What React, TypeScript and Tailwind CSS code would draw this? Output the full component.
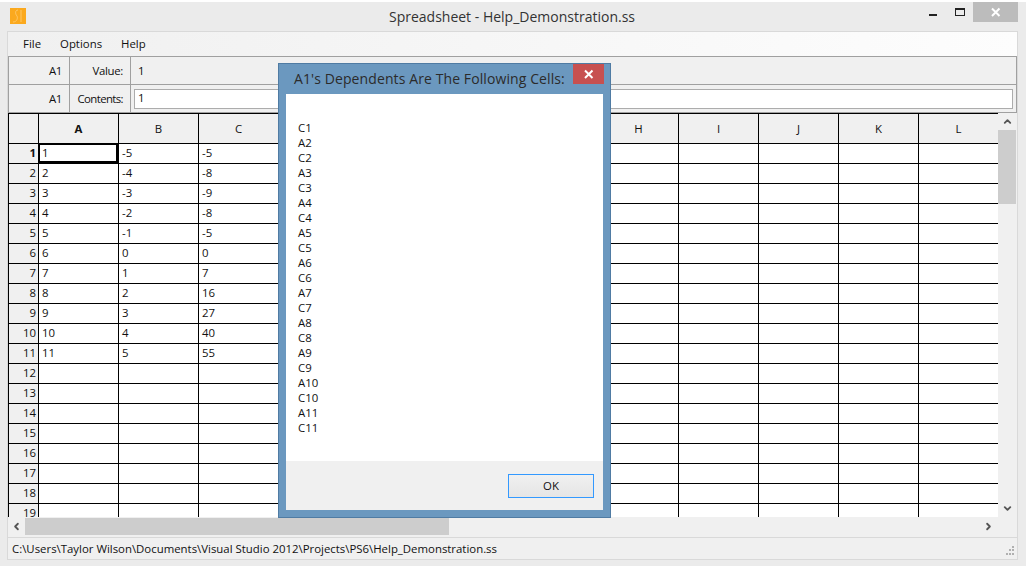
import React from 'react'
import { LuChevronUp, LuChevronDown, LuChevronLeft, LuChevronRight } from 'react-icons/lu'

const columns = ['A', 'B', 'C', 'D', 'E', 'F', 'G', 'H', 'I', 'J', 'K', 'L']
const colB = ['-5', '-4', '-3', '-2', '-1', '0', '1', '2', '3', '4', '5']
const colC = ['-5', '-8', '-9', '-8', '-5', '0', '7', '16', '27', '40', '55']
const dependents = ['C1', 'A2', 'C2', 'A3', 'C3', 'A4', 'C4', 'A5', 'C5', 'A6', 'C6', 'A7', 'C7', 'A8', 'C8', 'A9', 'C9', 'A10', 'C10', 'A11', 'C11']
const rows = Array.from({ length: 19 }, (_, i) => i + 1)

const cellText = (row: number, col: number) => {
  if (row > 11) return ''
  if (col === 0) return String(row)
  if (col === 1) return colB[row - 1]
  if (col === 2) return colC[row - 1]
  return ''
}

const Grid: React.FC = () => (
  <div className="flex-1 min-w-0 h-full overflow-hidden border-l border-t border-black bg-white">
    <div className="flex h-[30px] w-[990px] bg-[#f0f0f0]">
      <div className="w-[30px] shrink-0 border-r border-b border-black" />
      {columns.map((c, i) => (
        <div key={c} className={`w-[80px] shrink-0 border-r border-b border-black flex items-center justify-center ${i === 0 ? 'font-bold' : ''}`}>
          {c}
        </div>
      ))}
    </div>
    {rows.map(r => (
      <div key={r} className="flex h-[20px] w-[990px]">
        <div className={`w-[30px] shrink-0 border-r border-b border-black bg-[#f0f0f0] flex items-center justify-end pr-[2px] pb-[1px] ${r === 1 ? 'font-bold' : ''}`}>
          {r}
        </div>
        {columns.map((c, i) => (
          <div key={c} className="relative w-[80px] shrink-0 border-r border-b border-black flex items-center pl-[3px] pb-[1px]">
            {cellText(r, i)}
            {r === 1 && i === 0 && <div className="absolute -left-px -top-px w-[80px] h-[20px] border-2 border-black" />}
          </div>
        ))}
      </div>
    ))}
  </div>
)

const Dialog: React.FC = () => (
  <div className="absolute left-[278px] top-[63px] w-[333px] h-[455px] bg-[#6b98bf] border border-[#4f7ba3] flex flex-col px-[7px] pb-[7px]">
    <div className="h-[30px] shrink-0 flex items-start relative">
      <span className="ml-[8px] mt-[4px] text-[14px] leading-[22px] tracking-[0.1px] text-[#2b2b2b]">A1's Dependents Are The Following Cells:</span>
      <div className="absolute right-[-1px] top-0 w-[31px] h-[20px] bg-[#c75050] flex items-center justify-center">
        <svg width="10" height="10" viewBox="0 0 10 10"><path d="M1 1.5 L8.5 9 M8.5 1.5 L1 9" stroke="#fff" strokeWidth="2" /></svg>
      </div>
    </div>
    <div className="flex-1 flex flex-col min-h-0">
      <div className="h-[367px] bg-white pl-[12px] pt-[26px] leading-[15px] text-[#111]">
        {dependents.map(d => <div key={d}>{d}</div>)}
      </div>
      <div className="flex-1 bg-[#f0f0f0] flex justify-end items-start pt-[13px] pr-[9px]">
        <div className="w-[86px] h-[24px] border border-[#3399ff] bg-gradient-to-b from-[#f0f0f0] to-[#e5e5e5] flex items-center justify-center">OK</div>
      </div>
    </div>
  </div>
)

export default function App() {
  return (
    <div className="relative w-[1026px] h-[566px] overflow-hidden bg-[#ebebeb] text-[11.4px] text-[#111] font-['Open_Sans','Noto_Sans',sans-serif] flex flex-col">
      <div className="h-[2px] shrink-0 bg-white" />
      {/* title bar */}
      <div className="h-[29px] shrink-0 flex items-start relative">
        <div className="ml-[10px] mt-[6px] w-[16px] h-[16px] bg-[#fba91e] flex items-center justify-center">
          <svg width="12" height="14" viewBox="0 0 12 14"><path d="M6 1 C3 1 3 5 5 7 C6 9 5 13 1 13 M9 1 V13" stroke="#ffc766" strokeWidth="1" fill="none" /></svg>
        </div>
        <div className="absolute left-0 right-0 top-[3px] text-center text-[14px] leading-[24px] text-[#333] pr-[2px]">Spreadsheet - Help_Demonstration.ss</div>
        <div className="ml-auto flex items-start">
          <div className="w-[8px] h-[2px] bg-[#222] mt-[12px] mr-[18px]" />
          <div className="w-[10px] h-[8px] border border-t-2 border-[#222] mt-[6px] mr-[8px]" />
          <div className="w-[45px] h-[20px] bg-[#bcbcbc] flex items-center justify-center mr-[8px]">
            <svg width="10" height="10" viewBox="0 0 10 10"><path d="M1 1.5 L8.5 9 M8.5 1.5 L1 9" stroke="#fff" strokeWidth="2" /></svg>
          </div>
        </div>
      </div>
      {/* client area */}
      <div className="w-[1011px] ml-[7px] h-[529px] shrink-0 border-l border-t border-r border-b border-[#d9d9d9] bg-[#f0f0f0] flex flex-col">
        <div className="h-[24px] shrink-0 flex items-center gap-[19px] pl-[15px] bg-gradient-to-r from-[#f0f0f0] to-[#fdfdfd]">
          <span>File</span>
          <span>Options</span>
          <span>Help</span>
        </div>
        <div className="h-[57px] shrink-0 border-t border-b border-l border-r border-[#a0a0a0] flex flex-col">
          <div className="h-[28px] flex border-b border-[#a0a0a0]">
            <div className="w-[61px] border-r border-[#a0a0a0] flex items-center justify-end pr-[7px] pt-[1px] tracking-[-0.3px]">A1</div>
            <div className="w-[61px] border-r border-[#a0a0a0] flex items-center justify-end pr-[7px] pt-[1px] tracking-[-0.3px]">Value:</div>
            <div className="pl-[7px] pt-[1px] flex items-center">1</div>
          </div>
          <div className="flex-1 flex">
            <div className="w-[61px] border-r border-[#a0a0a0] flex items-center justify-end pr-[7px] tracking-[-0.3px]">A1</div>
            <div className="w-[61px] border-r border-[#a0a0a0] flex items-center justify-end pr-[7px] tracking-[-0.6px]">Contents:</div>
            <div className="flex-1 flex items-center pl-[3px] pr-[3px]">
              <div className="w-full h-[20px] border border-[#acacac] bg-white pl-[3px] pb-[2px] flex items-center">1</div>
            </div>
          </div>
        </div>
        <div className="h-[404px] shrink-0 flex">
          <Grid />
          <div className="w-[18px] shrink-0 mr-[1px] flex flex-col items-stretch">
            <div className="h-[17px] flex items-center justify-center text-[#555]"><LuChevronUp size={11} strokeWidth={4} /></div>
            <div className="h-[74px] bg-[#cdcdcd]" />
            <div className="flex-1" />
            <div className="h-[17px] flex items-center justify-center text-[#555]"><LuChevronDown size={11} strokeWidth={4} /></div>
          </div>
        </div>
        <div className="h-[20px] shrink-0 flex pt-[1px]">
          <div className="w-[17px] h-[17px] flex items-center justify-center text-[#555]"><LuChevronLeft size={11} strokeWidth={4} /></div>
          <div className="w-[424px] h-[17px] bg-[#cdcdcd]" />
          <div className="flex-1" />
          <div className="w-[17px] h-[17px] mr-[20px] flex items-center justify-center text-[#555]"><LuChevronRight size={11} strokeWidth={4} /></div>
        </div>
        <div className="flex-1 border-t border-[#d9d9d9] flex items-center pl-[4px] relative">
          C:\Users\Taylor Wilson\Documents\Visual Studio 2012\Projects\PS6\Help_Demonstration.ss
          <svg className="absolute right-[2px] bottom-[2px]" width="12" height="12" viewBox="0 0 12 12" fill="#b0b0b0">
            <rect x="9" y="1" width="2" height="2" /><rect x="6" y="4" width="2" height="2" /><rect x="9" y="4" width="2" height="2" />
            <rect x="3" y="8" width="2" height="2" /><rect x="6" y="8" width="2" height="2" /><rect x="9" y="8" width="2" height="2" />
          </svg>
        </div>
      </div>
      <Dialog />
    </div>
  )
}
